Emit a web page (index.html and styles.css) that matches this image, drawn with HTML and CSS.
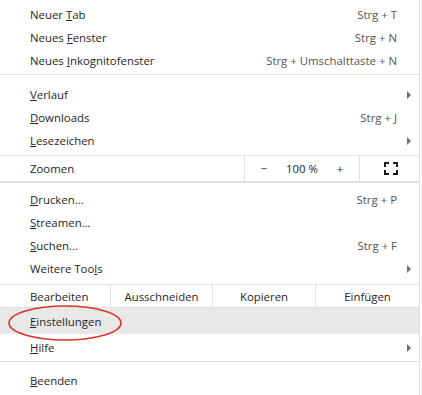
FILE: index.html
```html
<!DOCTYPE html>
<html lang="de">
<head>
  <meta charset="UTF-8">
  <title>Menü</title>
  <link rel="stylesheet" href="styles.css">
</head>
<body>
  <div class="menu">
    <div class="section first">
      <div class="item"><span class="label">Neuer <u>T</u>ab</span><span class="key">Strg + T</span></div>
      <div class="item"><span class="label">Neues <u>F</u>enster</span><span class="key">Strg + N</span></div>
      <div class="item"><span class="label">Neues <u>I</u>nkognitofenster</span><span class="key">Strg + Umschalttaste + N</span></div>
    </div>
    <div class="section second">
      <div class="item"><span class="label"><u>V</u>erlauf</span><span class="arrow"></span></div>
      <div class="item"><span class="label"><u>D</u>ownloads</span><span class="key">Strg + J</span></div>
      <div class="item"><span class="label"><u>L</u>esezeichen</span><span class="arrow"></span></div>
    </div>
    <div class="zoom-row">
      <span class="label">Zoomen</span>
      <div class="zoom-ctrl">
        <span class="zoom-btn">&minus;</span>
        <span class="zoom-value">100 %</span>
        <span class="zoom-btn">+</span>
      </div>
      <div class="fullscreen">
        <svg width="14" height="13" viewBox="0 0 14 13">
          <path d="M1 5V1H5M9 1H13V5M13 8V12H9M5 12H1V8" fill="none" stroke="#1a1a1a" stroke-width="2"/>
        </svg>
      </div>
    </div>
    <div class="section third">
      <div class="item"><span class="label"><u>D</u>rucken...</span><span class="key">Strg + P</span></div>
      <div class="item"><span class="label"><u>S</u>treamen...</span></div>
      <div class="item"><span class="label"><u>S</u>uchen...</span><span class="key">Strg + F</span></div>
      <div class="item"><span class="label">Weitere Too<u>l</u>s</span><span class="arrow"></span></div>
    </div>
    <div class="edit-row">
      <span class="edit-label">Bearbeiten</span>
      <span class="edit-btn cut">Ausschneiden</span>
      <span class="edit-btn">Kopieren</span>
      <span class="edit-btn">Einfügen</span>
    </div>
    <div class="section fourth">
      <div class="item active"><span class="label"><u>E</u>instellungen</span></div>
      <div class="item"><span class="label"><u>H</u>ilfe</span><span class="arrow"></span></div>
    </div>
    <div class="section last">
      <div class="item"><span class="label"><u>B</u>eenden</span></div>
    </div>

    <svg class="marker" width="116" height="40" viewBox="0 0 116 40">
      <ellipse cx="58" cy="19" rx="56" ry="17" fill="none" stroke="#d8352a" stroke-width="1.6"/>
    </svg>
  </div>
</body>
</html>
```

FILE: styles.css
```css
body {
  margin: 0;
  background: #fff;
  font-family: "Open Sans", "Noto Sans", sans-serif;
  font-size: 11.4px;
  color: #262626;
}

.menu {
  position: relative;
  width: 419px;
  border-right: 1px solid #e2e2e2;
  height: 395px;
}

.section {
  border-top: 1px solid #e0e0e0;
}

.section.first {
  border-top: none;
  padding: 3px 0 2px;
}

.section.second {
  padding: 8px 0 3px;
}

.section.third {
  padding: 5px 0 4px;
}

.section.fourth {
  padding: 0 0 2px;
}

.section.last {
  padding: 7px 0 0;
}

.item {
  display: flex;
  align-items: center;
  height: 23px;
  padding: 0 22px 0 30px;
  position: relative;
}

.item.active {
  background: #e8e8e8;
  height: 26px;
  margin-bottom: 2px;
}

.label {
  flex: 1;
}

.key {
  color: #555;
}

.arrow {
  position: absolute;
  right: 8px;
  top: 8px;
  width: 0;
  height: 0;
  border-top: 4px solid transparent;
  border-bottom: 4px solid transparent;
  border-left: 4px solid #6e6e6e;
}

/* zoom row */
.zoom-row {
  display: flex;
  align-items: center;
  height: 25px;
  border-top: 1px solid #e0e0e0;
  border-bottom: 1px solid #e0e0e0;
}

.zoom-row .label {
  flex: none;
  width: 214px;
  padding-left: 30px;
}

.zoom-ctrl {
  display: flex;
  align-items: center;
  width: 114px;
  height: 100%;
  border-left: 1px solid #e0e0e0;
  border-right: 1px solid #e0e0e0;
}

.zoom-btn {
  width: 38px;
  text-align: center;
}

.zoom-value {
  width: 38px;
  text-align: center;
}

.fullscreen {
  flex: 1;
  display: flex;
  justify-content: center;
  padding-left: 3px;
}

/* edit row */
.edit-row {
  display: flex;
  align-items: center;
  height: 22px;
  border-top: 1px solid #e0e0e0;
}

.edit-label {
  width: 80px;
  padding-left: 30px;
}

.edit-btn {
  height: 100%;
  display: flex;
  align-items: center;
  justify-content: center;
  width: 102px;
  border-left: 1px solid #e0e0e0;
}

.edit-btn.cut {
  width: 101px;
}

.edit-btn:last-child {
  flex: 1;
}

.marker {
  position: absolute;
  left: 7px;
  top: 304px;
}
```
